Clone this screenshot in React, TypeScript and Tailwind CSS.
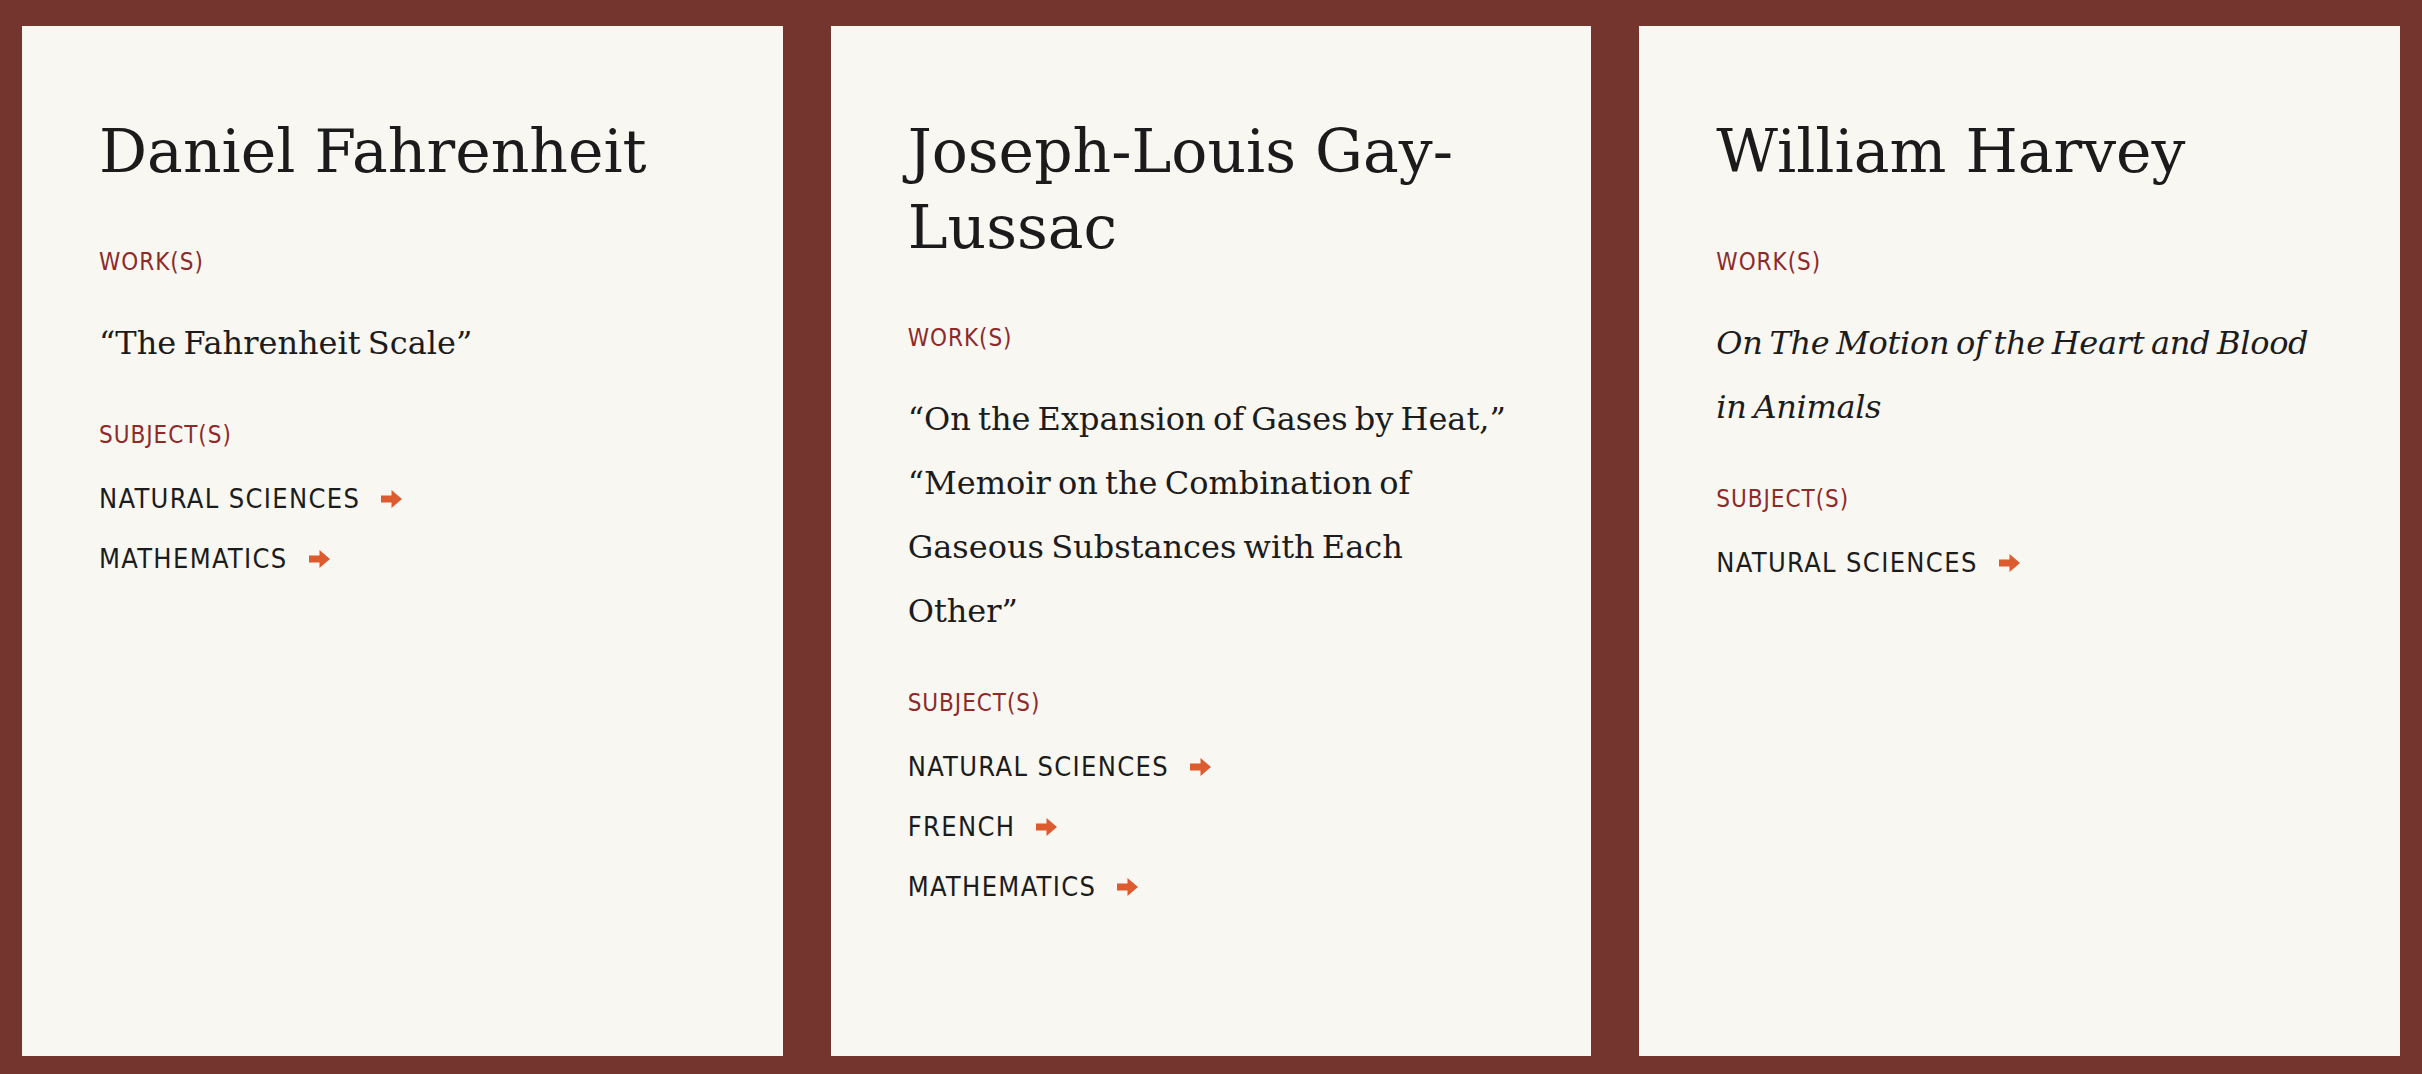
import React from 'react';

type Person = {
  name: string;
  works: string;
  italic?: boolean;
  subjects: string[];
};

const PEOPLE: Person[] = [
  {
    name: 'Daniel Fahrenheit',
    works: '\u201cThe Fahrenheit Scale\u201d',
    subjects: ['Natural Sciences', 'Mathematics'],
  },
  {
    name: 'Joseph-Louis Gay-Lussac',
    works:
      '\u201cOn the Expansion of Gases by Heat,\u201d \u201cMemoir on the Combination of Gaseous Substances with Each Other\u201d',
    subjects: ['Natural Sciences', 'French', 'Mathematics'],
  },
  {
    name: 'William Harvey',
    works: 'On The Motion of the Heart and Blood in Animals',
    italic: true,
    subjects: ['Natural Sciences'],
  },
];

const serif = "font-['DejaVu_Serif',serif]";
const sans = "font-['Liberation_Sans_Narrow','DejaVu_Sans_Condensed',Roboto,sans-serif]";

const Arrow = () => (
  <svg width="21" height="18" viewBox="0 0 21 18" className="shrink-0">
    <path d="M0 5.5H10.5V0L21 9L10.5 18V12.5H0Z" fill="#dc5b2f" />
  </svg>
);

const Label: React.FC<{ children: React.ReactNode; className?: string }> = ({ children, className }) => (
  <p className={`${sans} text-[24px] leading-[36px] tracking-[0.04em] uppercase text-[#8e2a2a] ${className ?? ''}`}>
    {children}
  </p>
);

const Card: React.FC<{ person: Person }> = ({ person }) => (
  <article className="bg-[#f8f7f2] px-[77px] pt-[87px] pb-12">
    <h2 className={`${serif} text-[60px] leading-[76px] text-[#1b1b1b]`}>{person.name}</h2>

    <Label className="mt-[55px]">Work(s)</Label>
    <p
      className={`${serif} mt-[31px] text-[32px] leading-[64px] [word-spacing:-3px] text-[#1c1c1c] ${
        person.italic ? 'italic tracking-[-0.01em]' : ''
      }`}
    >
      {person.works}
    </p>

    <Label className="mt-[42px]">Subject(s)</Label>
    <ul className="mt-4">
      {person.subjects.map((s) => (
        <li key={s} className="flex items-center gap-[21px] h-[60px]">
          <span className={`${sans} text-[27px] tracking-[0.05em] uppercase text-[#1c1c1c]`}>{s}</span>
          <Arrow />
        </li>
      ))}
    </ul>
  </article>
);

export default function App() {
  return (
    <div className="min-h-screen bg-[#74352f] pt-[26px] pb-[18px] px-[22px] flex flex-col">
      <div className="flex-1 grid grid-cols-3 gap-12">
        {PEOPLE.map((p) => (
          <Card key={p.name} person={p} />
        ))}
      </div>
    </div>
  );
}
